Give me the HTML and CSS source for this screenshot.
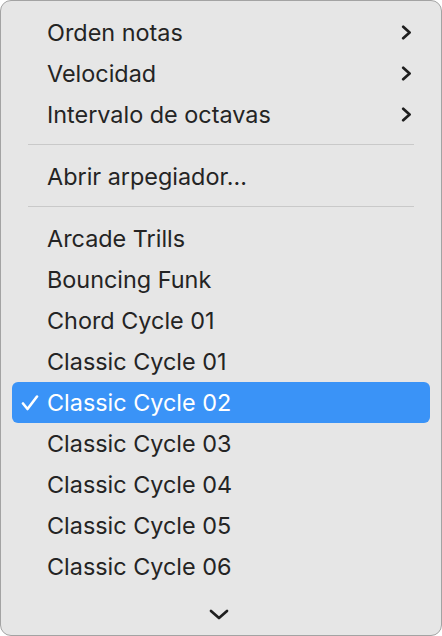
FILE: index.html
```html
<!DOCTYPE html>
<html lang="es">
<head>
<meta charset="utf-8">
<title>Menú arpegiador</title>
<link rel="stylesheet" href="styles.css">
</head>
<body>
<div class="menu">
  <ul class="list">
    <li class="item"><span class="label">Orden notas</span><svg class="chev-right" viewBox="0 0 11 15" width="11" height="15"><path d="M2.2 1.8 L8.6 7.5 L2.2 13.2" /></svg></li>
    <li class="item"><span class="label">Velocidad</span><svg class="chev-right" viewBox="0 0 11 15" width="11" height="15"><path d="M2.2 1.8 L8.6 7.5 L2.2 13.2" /></svg></li>
    <li class="item"><span class="label">Intervalo de octavas</span><svg class="chev-right" viewBox="0 0 11 15" width="11" height="15"><path d="M2.2 1.8 L8.6 7.5 L2.2 13.2" /></svg></li>
    <li class="sep"></li>
    <li class="item"><span class="label">Abrir arpegiador…</span></li>
    <li class="sep"></li>
    <li class="item"><span class="label">Arcade Trills</span></li>
    <li class="item"><span class="label">Bouncing Funk</span></li>
    <li class="item"><span class="label">Chord Cycle 01</span></li>
    <li class="item"><span class="label">Classic Cycle 01</span></li>
    <li class="item selected"><svg class="check" viewBox="0 0 18 16" width="18" height="16"><path d="M2 8.5 L6.5 14 L16 1.5" /></svg><span class="label">Classic Cycle 02</span></li>
    <li class="item"><span class="label">Classic Cycle 03</span></li>
    <li class="item"><span class="label">Classic Cycle 04</span></li>
    <li class="item"><span class="label">Classic Cycle 05</span></li>
    <li class="item"><span class="label">Classic Cycle 06</span></li>
  </ul>
  <div class="more"><svg class="chev-down" viewBox="0 0 20 11" width="20" height="11"><path d="M2 2 L10 9 L18 2" /></svg></div>
</div>
</body>
</html>
```

FILE: styles.css
```css
html, body {
  margin: 0;
  padding: 0;
  background: #ffffff;
}

.menu {
  box-sizing: border-box;
  width: 442px;
  height: 636px;
  background: #e6e6e6;
  border: 1px solid #a3a3a3;
  border-radius: 11px;
  padding-top: 11px;
  display: flex;
  flex-direction: column;
  font-family: "Inter", "Noto Sans", sans-serif;
  font-size: 23.4px;
  color: #242424;
}

.list {
  list-style: none;
  margin: 0;
  padding: 0;
}

.item {
  position: relative;
  height: 41px;
  margin: 0 11px;
  padding: 0 18px 0 35px;
  display: flex;
  align-items: center;
  justify-content: space-between;
  border-radius: 6px;
}

.label {
  white-space: nowrap;
  margin-top: -1px;
}

.chev-right path,
.chev-down path {
  fill: none;
  stroke: #1e1e1e;
  stroke-width: 2.7;
  stroke-linecap: round;
  stroke-linejoin: round;
}

.selected {
  background: #3a93f7;
  color: #ffffff;
  justify-content: flex-start;
}

.check {
  position: absolute;
  left: 9px;
  top: 13px;
}

.check path {
  fill: none;
  stroke: #ffffff;
  stroke-width: 2.6;
  stroke-linecap: round;
  stroke-linejoin: round;
}

.sep {
  height: 1px;
  background: #c9c9c9;
  margin: 9px 27px 11px 27px;
}

.more {
  display: flex;
  justify-content: center;
  padding-top: 22px;
  padding-right: 4px;
}
```
